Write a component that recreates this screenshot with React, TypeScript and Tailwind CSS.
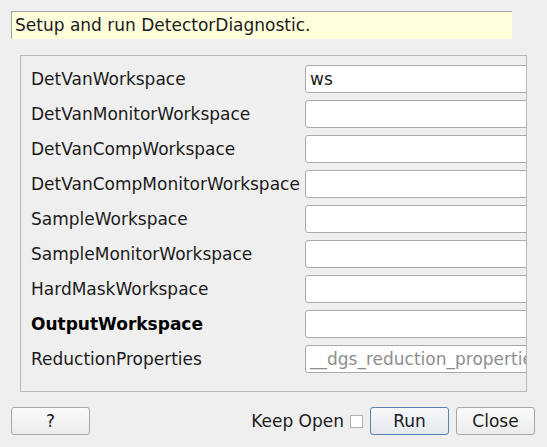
const rows: Array<{ label: string; value?: string; placeholder?: string; bold?: boolean }> = [
  { label: "DetVanWorkspace", value: "ws" },
  { label: "DetVanMonitorWorkspace" },
  { label: "DetVanCompWorkspace" },
  { label: "DetVanCompMonitorWorkspace" },
  { label: "SampleWorkspace" },
  { label: "SampleMonitorWorkspace" },
  { label: "HardMaskWorkspace" },
  { label: "OutputWorkspace", bold: true },
  { label: "ReductionProperties", placeholder: "__dgs_reduction_properties" },
];

export default function App() {
  return (
    <div className="relative h-[447px] w-[547px] overflow-hidden bg-[#efefef] font-['DejaVu_Sans',sans-serif] text-[17px] text-[#1b1b1b]">
      <div className="ml-[11px] pt-[11px]">
        <div className="flex h-[28px] w-[501px] items-center border-l border-t border-[#a3a3a3] bg-[#ffffdc] pl-[3px] pt-[1px]">
          Setup and run DetectorDiagnostic.
        </div>
      </div>

      <div className="ml-[20px] mt-[16px] h-[337px] w-[507px] overflow-hidden border border-[#b9b9b9] pt-[9px]">
        <div className="flex w-[600px] flex-col gap-[7px]">
          {rows.map((row) => (
            <div key={row.label} className="flex h-[28px] items-center">
              <div className={`w-[284px] shrink-0 whitespace-nowrap pl-[10px] pt-[2px] ${row.bold ? "font-bold text-black" : ""}`}>{row.label}</div>
              <div className="flex h-[28px] w-[300px] shrink-0 items-center overflow-hidden whitespace-nowrap rounded-[3px] border border-[#aaaaaa] bg-white pl-[4px] pt-[2px]">
                {row.value ? <span>{row.value}</span> : null}
                {row.placeholder ? <span className="text-[#8e8e8e]">{row.placeholder}</span> : null}
              </div>
            </div>
          ))}
        </div>
      </div>

      <div className="mt-[15px] flex h-[28px] items-center pl-[11px] pr-[12px]">
        <button className="h-[28px] w-[79px] rounded-[3px] border border-[#a8a8a8] bg-gradient-to-b from-[#fbfbfb] to-[#ececec] pt-[1px]">?</button>
        <div className="flex-1" />
        <span className="mr-[6px] pt-[1px]">Keep Open</span>
        <span className="mr-[7px] h-[13px] w-[13px] border border-[#b0b0b0] bg-white" />
        <button className="mr-[7px] h-[28px] w-[79px] rounded-[3px] border border-[#5a82ad] bg-gradient-to-b from-[#f6f8fa] to-[#e4e9ee] pt-[1px]">Run</button>
        <button className="h-[28px] w-[79px] rounded-[3px] border border-[#a8a8a8] bg-gradient-to-b from-[#fbfbfb] to-[#ececec] pt-[1px]">Close</button>
      </div>
    </div>
  );
}
